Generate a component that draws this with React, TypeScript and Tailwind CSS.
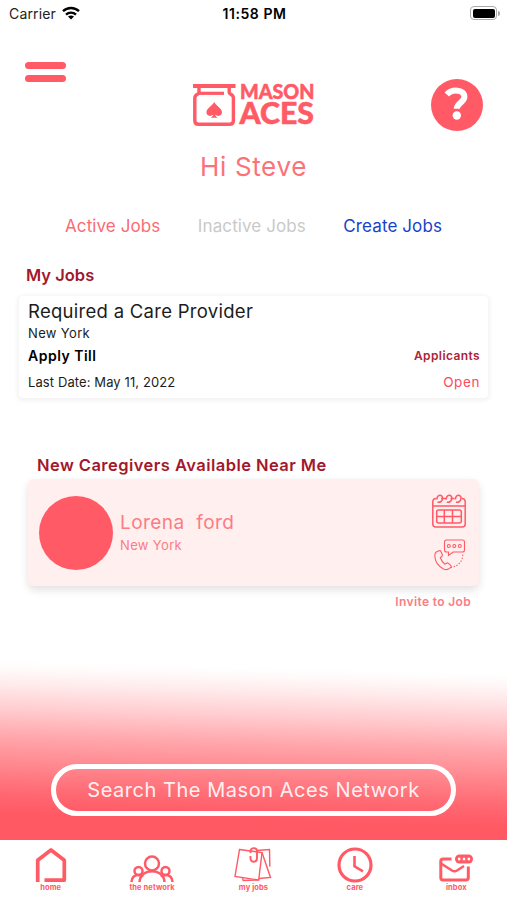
import type { ReactNode } from 'react';

const CORAL = '#ff5a66';

const MasonLogo = () => (
  <svg width="126" height="50" viewBox="192 78 126 50" fill="none" stroke={CORAL}>
    <path d="M193 86h42.500" strokeWidth="4" />
    <path d="M199 87v5.500c0 2-4.200 1.800-4.200 5.500v22.500q0 3.800 3.800 3.800h31q3.800 0 3.800-3.800V98c0-3.700-4.200-3.500-4.200-5.500V87" strokeWidth="3.400" />
    <path d="M199 93.300h25" strokeWidth="3.200" />
    <path
      d="M214.200 102c1.500 3.500 7.800 6.500 7.800 10.300 0 3.700-4.500 4.700-6.800 2.200.2 1.600 1.200 2.500 2.800 3.200h-7.600c1.600-.7 2.600-1.600 2.800-3.200-2.300 2.500-6.800 1.500-6.800-2.200 0-3.800 6.300-6.800 7.800-10.300z"
      fill={CORAL}
      stroke="none"
    />
    <g fill={CORAL} strokeWidth="0.500" fontFamily="Lato, sans-serif" fontWeight="900">
      <text x="240" y="99.200" fontSize="20.500" textLength="74.500" lengthAdjust="spacingAndGlyphs">MASON</text>
      <text x="239.500" y="123.500" fontSize="29.500" textLength="74.500" lengthAdjust="spacingAndGlyphs">ACES</text>
    </g>
  </svg>
);

const HelpIcon = () => (
  <svg width="52" height="52" viewBox="0 0 52 52">
    <circle cx="26" cy="26" r="26" fill={CORAL} />
    <path d="M15.800 15.500c5-5.600 17.600-5.400 17.600 2.300 0 5.700-7.600 5.900-7.600 12" fill="none" stroke="#fff" strokeWidth="6" />
    <circle cx="25.800" cy="36.500" r="4.200" fill="#fff" />
  </svg>
);

const WifiIcon = () => (
  <svg width="18" height="14" viewBox="0 0 18 14" fill="none" stroke="#000" strokeWidth="2.400">
    <path d="M1 5.200a11.500 11.500 0 0 1 16 0" />
    <path d="M4 8.600a7.200 7.200 0 0 1 10 0" />
    <path d="M9 13.600l-3-3q3-2.400 6 0z" fill="#000" stroke="none" />
  </svg>
);

const CalendarIcon = () => (
  <svg width="34" height="34" viewBox="0 0 34 34" fill="none" stroke={CORAL} strokeWidth="1.500">
    <path d="M4.500 4.500H3.800a3 3 0 0 0-3 3V30a3 3 0 0 0 3 3h26.400a3 3 0 0 0 3-3V7.500a3 3 0 0 0-3-3h-.7M9 4.500h5M18.500 4.500h4M.8 12h32.400" />
    <path d="M5 5.500C4.500 0 11 .200 10.500 4.500c-.2 3-3 4.500-5 3.500M14.300 5.500c-.5-5.500 6-5.300 5.500-1-.2 3-3 4.500-5 3.500M23.500 5.500c-.5-5.500 6-5.300 5.500-1-.2 3-3 4.500-5 3.500" />
    <rect x="4.700" y="16" width="24.600" height="13" rx="2" />
    <path d="M4.700 22.500h24.600M12.300 16v13M20.500 16v13" />
  </svg>
);

const PhoneChatIcon = () => (
  <svg width="32" height="32" viewBox="0 0 32 32" fill="none" stroke={CORAL} strokeWidth="1.100">
    <path d="M12.500 1h16a2 2 0 0 1 2 2v8a2 2 0 0 1-2 2H19l-4.500 3.500V13h-2a2 2 0 0 1-2-2V3a2 2 0 0 1 2-2z" />
    <circle cx="14.800" cy="7" r="1.500" />
    <circle cx="20.300" cy="7" r="1.500" />
    <circle cx="25.800" cy="7" r="1.500" />
    <path d="M2.600 12.800l2.500-1.100q1.500-.4 2 1l1.200 3q.4 1.300-.8 2l-1.200.8q1.300 4.300 4.800 6.700l1.400-1q1-.7 2 .2l2.200 2q1 1.200-.2 2.300-3 3-7 1.200Q1 25.500.8 16.500q0-2.700 1.800-3.700z" />
    <path d="M16.500 28.500C24 27.500 29 22.500 28.800 14.500" strokeDasharray="1.500 1.500" />
  </svg>
);

const HomeIcon = () => (
  <svg width="32" height="36" viewBox="0 0 32 36" fill="none" stroke={CORAL} strokeWidth="3.700">
    <path d="M2.700 35V13.300L16 3l13.300 10.300v19.800H9.500" strokeLinejoin="round" />
  </svg>
);

const NetworkIcon = () => (
  <svg width="44" height="28" viewBox="0 0 44 28" fill="none" stroke={CORAL} strokeWidth="2.500">
    <circle cx="22" cy="8.500" r="7" />
    <circle cx="8.500" cy="16" r="4" />
    <circle cx="35.500" cy="16" r="4" />
    <path d="M9.500 27c.8-14.500 24.200-14.500 25 0M1.500 27c.3-4.500 3-7 7-7 2 0 3.500.6 4.500 1.800M42.500 27c-.3-4.500-3-7-7-7-2 0-3.500.6-4.500 1.800" />
  </svg>
);

const JobsIcon = () => (
  <svg width="38" height="36" viewBox="0 0 38 36" fill="none" stroke={CORAL} strokeWidth="1.400">
    <path d="M5.500 2.500l22.500 3-3.300 27.500L1 29.500z" />
    <path d="M22.500 3.500l13-1 .3 17M28 5.500l8.500 25-11.500 1M8.500 31l.7 2.500 15.500-.5" />
    <path d="M16.500 6V4.300c0-4.300 6.500-4.300 6.500 0V11c0 5-6.500 5-6.500.3V9" strokeWidth="1.900" />
  </svg>
);

const ClockIcon = () => (
  <svg width="36" height="36" viewBox="0 0 36 36" fill="none" stroke={CORAL}>
    <circle cx="18" cy="18" r="16" strokeWidth="3.200" />
    <path d="M17.500 9v10.300l8.500 5" strokeWidth="2.600" />
  </svg>
);

const InboxIcon = () => (
  <svg width="34" height="29" viewBox="0 0 34 29" fill="none" stroke={CORAL} strokeWidth="3">
    <path d="M12.500 5H4Q1.800 5 1.800 7.200v16.600Q1.800 26 4 26h23q2.300 0 2.300-2.200V12.500" />
    <path d="M2 9.500l11 7q2.500 1.500 5 0l7-4.500" strokeWidth="2.500" />
    <rect x="16" y="0.500" width="18" height="9" rx="4.500" fill={CORAL} stroke="none" />
    <path d="M19 5h2.400M23.800 5h2.400M28.600 5H31" stroke="#fff" strokeWidth="2.400" />
  </svg>
);

const NAV: { label: string; icon: ReactNode }[] = [
  { label: 'home', icon: <HomeIcon /> },
  { label: 'the network', icon: <NetworkIcon /> },
  { label: 'my jobs', icon: <JobsIcon /> },
  { label: 'care', icon: <ClockIcon /> },
  { label: 'inbox', icon: <InboxIcon /> },
];

export default function App() {
  return (
    <div className="flex h-[900px] w-[507px] flex-col overflow-hidden bg-white font-['Inter',sans-serif] whitespace-nowrap">
      {/* Status bar */}
      <div className="grid h-7 shrink-0 grid-cols-3 items-center pr-[7px] pb-[2px] pl-[9px] text-[14px]">
        <div className="flex items-center gap-1.5">
          <span className="tracking-[0.15px] text-[#222]">Carrier</span>
          <WifiIcon />
        </div>
        <span className="text-center font-semibold tracking-[0.55px]">11:58 PM</span>
        <div className="flex items-center justify-end gap-px">
          <div className="h-[14px] w-[27px] rounded-[4px] border border-[#aaa] p-[1.5px]">
            <div className="h-full rounded-[2px] bg-black" />
          </div>
          <div className="h-[5px] w-[2px] rounded-r bg-[#aaa]" />
        </div>
      </div>

      {/* Header */}
      <header className="flex h-[120px] shrink-0 justify-between pr-6 pl-[25px]">
        <button className="mt-[34px] flex h-5 w-[41px] flex-col justify-between">
          <span className="h-[7px] w-full rounded-full bg-[#ff5a66]" />
          <span className="h-[7px] w-full rounded-full bg-[#ff5a66]" />
        </button>
        <div className="mt-[50px] ml-[13px]">
          <MasonLogo />
        </div>
        <button className="mt-[51px] h-[52px]">
          <HelpIcon />
        </button>
      </header>

      <h1 className="h-[38px] shrink-0 text-center text-[26px] leading-[38px] tracking-[0.65px] text-[#fb7379]">Hi Steve</h1>

      {/* Tabs */}
      <div className="mt-[28px] flex h-6 shrink-0 justify-between px-[65px] text-[17px] leading-6 tracking-[0.1px]">
        <span className="text-[#fb6b73]">Active Jobs</span>
        <span className="text-[#c9c9c9]">Inactive Jobs</span>
        <span className="text-[#1742c8]">Create Jobs</span>
      </div>

      <h2 className="mt-[25px] h-6 shrink-0 pl-[26px] text-[16.500px] leading-6 font-semibold text-[#a3182b]">My Jobs</h2>

      <section className="mx-[19px] mt-[9px] flex h-[102px] shrink-0 flex-col rounded-[4px] bg-white pr-[8px] pl-[9px] text-[13px] text-[#1c1c1c] shadow-[0_1px_4px_2px_rgba(0,0,0,0.05)]">
        <h3 className="mt-[2px] h-[25px] text-[18.500px] leading-[26px] tracking-[0.28px]">Required a Care Provider</h3>
        <p className="h-5 leading-5 tracking-[0.35px]">New York</p>
        <div className="flex h-[25px] items-center justify-between">
          <span className="text-[14px] font-semibold tracking-[0.5px] text-black">Apply Till</span>
          <span className="text-[12px] font-semibold tracking-[0.4px] text-[#ae2438]">Applicants</span>
        </div>
        <div className="mt-[2px] flex h-[25px] items-center justify-between">
          <span className="tracking-[0.1px]">Last Date: May 11, 2022</span>
          <span className="text-[13.500px] tracking-[0.6px] text-[#fb4a60]">Open</span>
        </div>
      </section>

      <h2 className="mt-[55px] h-6 shrink-0 pl-[37px] text-[16.500px] leading-6 font-semibold tracking-[0.45px] text-[#a3182b]">
        New Caregivers Available Near Me
      </h2>

      <section className="mx-7 mt-[2px] flex h-[107px] shrink-0 items-center rounded-[6px] bg-[#ffefef] pr-[13px] pl-[11px] shadow-[0_4px_8px_rgba(0,0,0,0.12)]">
        <div className="h-[74px] w-[74px] rounded-full bg-[#ff5a66]" />
        <div className="ml-[7px] text-[#fa7d84]">
          <p className="text-[19px] leading-6 tracking-[0.45px] whitespace-pre">Lorena  ford</p>
          <p className="text-[13px] leading-5 tracking-[0.35px]">New York</p>
        </div>
        <div className="ml-auto flex flex-col items-end gap-[11px]">
          <CalendarIcon />
          <PhoneChatIcon />
        </div>
      </section>
      <p className="mt-[6px] h-5 shrink-0 pr-9 text-right text-[12px] leading-5 font-semibold tracking-[0.35px] text-[#fa7d84]">Invite to Job</p>

      {/* Search footer */}
      <div className="mt-auto flex h-[190px] shrink-0 items-end justify-center bg-[linear-gradient(181.5deg,#fff_12%,#fff8f8_17%,#ffe9ea_24%,#ffced1_35%,#ffa7ac_49%,#ff858c_64%,#ff6872_77%,#ff5964_87%)] pb-6">
        <button className="h-[52px] w-[405px] rounded-full border-[5px] border-white text-[20px] tracking-[0.54px] text-[#fff0f0]">
          Search The Mason Aces Network
        </button>
      </div>

      <nav className="grid h-[60px] shrink-0 grid-cols-5 bg-white">
        {NAV.map(({ label, icon }) => (
          <div key={label} className="flex flex-col items-center justify-end pb-[8px]">
            {icon}
            <span className="text-[7.500px] leading-[9px] font-bold tracking-[0.1px] text-[#ff5a66]">{label}</span>
          </div>
        ))}
      </nav>
    </div>
  );
}
